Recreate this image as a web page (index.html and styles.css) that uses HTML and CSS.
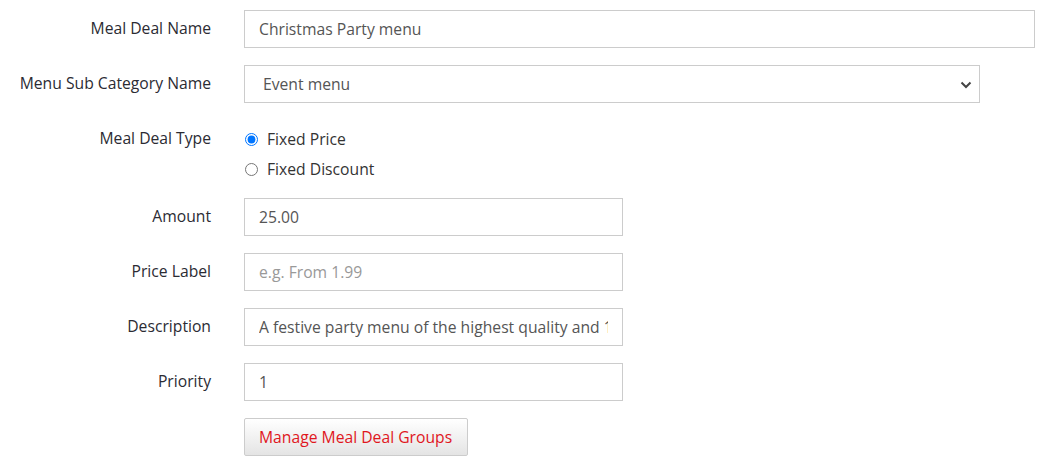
FILE: index.html
```html
<!DOCTYPE html>
<html>
<head>
<meta charset="utf-8">
<link rel="stylesheet" href="styles.css">
</head>
<body>
<form class="form">
  <div class="row">
    <label class="label">Meal Deal Name</label>
    <div class="field"><input class="control control-wide" type="text" value="Christmas Party menu"></div>
  </div>
  <div class="row">
    <label class="label">Menu Sub Category Name</label>
    <div class="field">
      <div class="select-wrap">
        <select class="control control-select"><option>Event menu</option></select>
        <svg class="chevron" width="12" height="8" viewBox="0 0 12 8"><path d="M1.5 1.5 L6 6 L10.5 1.5" fill="none" stroke="#444" stroke-width="2"/></svg>
      </div>
    </div>
  </div>
  <div class="row row-radio">
    <label class="label">Meal Deal Type</label>
    <div class="field radios">
      <label class="radio"><input type="radio" name="t" checked><span>Fixed Price</span></label>
      <label class="radio"><input type="radio" name="t"><span>Fixed Discount</span></label>
    </div>
  </div>
  <div class="row">
    <label class="label">Amount</label>
    <div class="field"><input class="control control-short" type="text" value="25.00"></div>
  </div>
  <div class="row">
    <label class="label">Price Label</label>
    <div class="field"><input class="control control-short" type="text" placeholder="e.g. From 1.99"></div>
  </div>
  <div class="row">
    <label class="label">Description</label>
    <div class="field"><input class="control control-short" type="text" value="A festive party menu of the highest quality and 100% delicious"></div>
  </div>
  <div class="row">
    <label class="label">Priority</label>
    <div class="field"><input class="control control-short" type="text" value="1"></div>
  </div>
  <div class="row">
    <span class="label"></span>
    <div class="field"><button type="button" class="btn">Manage Meal Deal Groups</button></div>
  </div>
</form>
</body>
</html>
```
FILE: styles.css
```css
* { box-sizing: border-box; }
html, body { margin: 0; padding: 0; background: #fff; }
body {
  font-family: "Open Sans", "Noto Sans", sans-serif;
  font-size: 15.7px;
  color: #333;
}
.form {
  padding: 10px 17px 0 0;
  display: flex;
  flex-direction: column;
  gap: 17px;
}
.row {
  display: grid;
  grid-template-columns: 211px 1fr;
  column-gap: 33px;
  align-items: start;
}
.label {
  text-align: right;
  line-height: 37px;
  color: #2b2b33;
  white-space: nowrap;
}
.field { min-width: 0; }
.control {
  display: block;
  height: 38px;
  border: 1px solid #ccc;
  border-radius: 0;
  padding: 0 14px;
  font-family: inherit;
  font-size: 15.7px;
  color: #555;
  background: #fff;
  outline: none;
}
.control::placeholder { color: #999; }
.control-wide { width: 100%; }
.control-short { width: 379px; }
.select-wrap { position: relative; width: 736px; }
.control-select {
  width: 100%;
  appearance: none;
  -webkit-appearance: none;
  padding-left: 18px;
}
.chevron { position: absolute; right: 8px; top: 16px; pointer-events: none; }
.row-radio { margin-bottom: -3px; }
.radios { padding-top: 4px; display: flex; flex-direction: column; }
.radio {
  display: flex;
  align-items: center;
  height: 30px;
  color: #333;
}
.radio input {
  margin: 0 9px 0 1px;
  width: 13px;
  height: 13px;
}
.btn {
  height: 38px;
  width: 224px;
  padding: 0 14px;
  border: 1px solid #ccc;
  border-radius: 2px;
  background: linear-gradient(#fff, #e4e4e4);
  color: #e0171e;
  font-family: inherit;
  font-size: 15.7px;
  text-align: left;
}
```
